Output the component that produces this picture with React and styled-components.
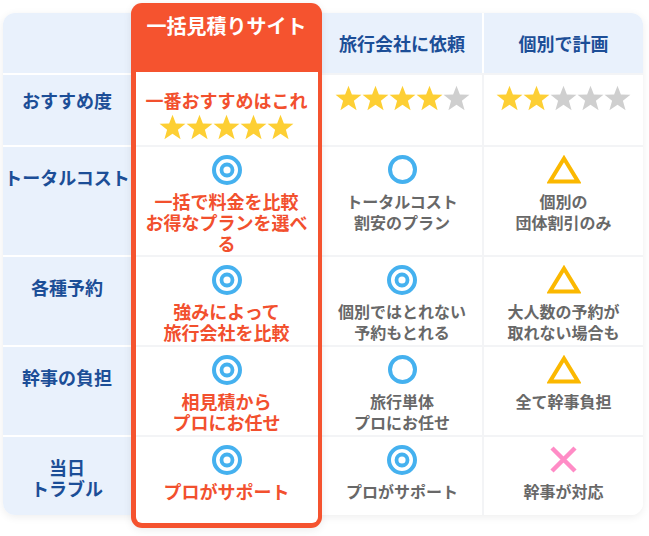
import styled, { createGlobalStyle } from 'styled-components'

const ROWS = [60, 72, 110, 90, 90, 80]

const GlobalStyle = createGlobalStyle`
  body {
    margin: 0;
    background: #fff;
    font-family: 'Noto Sans CJK JP', 'Noto Sans', sans-serif;
  }
`

const Page = styled.div`
  padding: 13px 0 21px 3px;
`

const Table = styled.div`
  display: grid;
  width: 640px;
  grid-template-columns: 128px 191px 160px 161px;
  grid-template-rows: ${ROWS.map((h) => h + 'px').join(' ')};
  border-radius: 12px;
  box-shadow: 0 2px 8px rgba(0, 0, 0, 0.07);
`

const HeadCell = styled.div`
  display: flex;
  align-items: center;
  justify-content: center;
  background: #e9f1fc;
  color: #1c4e97;
  font-size: 18px;
  font-weight: 700;
  border-left: ${(p) => (p.$divider ? '2px solid #fff' : 'none')};
  border-radius: ${(p) => p.$radius || '0'};
`

const LabelCell = styled.div`
  background: #e9f1fc;
  border-top: 2px solid #fff;
  border-radius: ${(p) => (p.$last ? '0 0 0 12px' : '0')};
  padding-top: ${(p) => (p.$first ? '15px' : '20px')};
  color: #1c4e97;
  font-size: 18px;
  font-weight: 700;
  line-height: 21px;
  text-align: center;
  white-space: pre-line;
`

const BodyCell = styled.div`
  display: flex;
  flex-direction: column;
  align-items: center;
  gap: 7px;
  background: #fff;
  border-top: 2px solid #f3f4f6;
  border-left: ${(p) => (p.$divider ? '2px solid #f3f4f6' : 'none')};
  border-radius: ${(p) => (p.$last && p.$divider ? '0 0 12px 0' : '0')};
  padding-top: ${(p) => p.$pad}px;
`

const GrayText = styled.div`
  color: #686868;
  font-size: 16px;
  font-weight: 700;
  line-height: 21px;
  text-align: center;
  white-space: pre-line;
`

const Highlight = styled.div`
  grid-column: 2;
  grid-row: 1 / span 6;
  align-self: start;
  height: 525px;
  box-sizing: border-box;
  margin-top: -10px;
  display: flex;
  flex-direction: column;
  background: #f5532f;
  border-radius: 11px;
  padding: 0 4.5px 5px;
  box-shadow: 0 2px 8px rgba(0, 0, 0, 0.08);
  position: relative;
  z-index: 1;
`

const HighlightTitle = styled.div`
  height: 69px;
  flex: none;
  padding-top: 9px;
  box-sizing: border-box;
  color: #fff;
  font-size: 20px;
  font-weight: 700;
  line-height: 28px;
  text-align: center;
`

const HighlightBody = styled.div`
  flex: 1;
  min-height: 0;
  display: flex;
  flex-direction: column;
  background: #fff;
  border-radius: 0 0 6px 6px;
`

const HighlightCell = styled.div`
  display: flex;
  flex-direction: column;
  align-items: center;
  gap: ${(p) => (p.$first ? '3px' : '7px')};
  box-sizing: border-box;
  height: ${(p) => (p.$fill ? 'auto' : p.$h + 'px')};
  flex: ${(p) => (p.$fill ? '1' : 'none')};
  border-top: ${(p) => (p.$first ? 'none' : '2px solid #f3f4f6')};
  padding: ${(p) => (p.$first ? '18px 8px 0' : '8px 8px 0')};
`

const OrangeText = styled.div`
  color: #f2502e;
  font-size: 18px;
  font-weight: 700;
  line-height: 21px;
  text-align: center;
  white-space: pre-line;
`

const IconBox = styled.div`
  height: 29px;
  display: flex;
  align-items: center;
  justify-content: center;
`

const StarRow = styled.div`
  display: flex;
`

const Star = ({ on }) => (
  <svg width="27" height="26" viewBox="0 0 24 23">
    <polygon
      points="12,0.5 15,8.3 23.5,8.6 16.8,13.9 19.2,22.3 12,17.4 4.8,22.3 7.2,13.9 0.5,8.6 9,8.3"
      fill={on ? '#fdcf34' : '#cfcfcf'}
    />
  </svg>
)

const Stars = ({ n }) => (
  <StarRow>
    {[0, 1, 2, 3, 4].map((i) => (
      <Star key={i} on={i < n} />
    ))}
  </StarRow>
)

const Mark = ({ type }) => {
  if (type === 'double')
    return (
      <svg width="30" height="30" viewBox="0 0 30 30">
        <circle cx="15" cy="15" r="13" fill="none" stroke="#45b1ef" strokeWidth="4" />
        <circle cx="15" cy="15" r="5.5" fill="none" stroke="#45b1ef" strokeWidth="3.8" />
      </svg>
    )
  if (type === 'circle')
    return (
      <svg width="29" height="29" viewBox="0 0 29 29">
        <circle cx="14.5" cy="14.5" r="12.5" fill="none" stroke="#45b1ef" strokeWidth="4" />
      </svg>
    )
  if (type === 'triangle')
    return (
      <svg width="34" height="29" viewBox="0 0 34 29">
        <polygon points="17,3.5 31,26.5 3,26.5" fill="none" stroke="#fbb800" strokeWidth="4" />
      </svg>
    )
  return (
    <svg width="29" height="29" viewBox="0 0 29 29">
      <path d="M3 3 L26 26 M26 3 L3 26" stroke="#ff8cc6" strokeWidth="4.5" />
    </svg>
  )
}

const rows = [
  {
    label: 'おすすめ度',
    best: { stars: 5, text: '一番おすすめはこれ' },
    others: [{ stars: 4 }, { stars: 2 }],
  },
  {
    label: 'トータルコスト',
    best: { mark: 'double', text: '一括で料金を比較\nお得なプランを選べる' },
    others: [
      { mark: 'circle', text: 'トータルコスト\n割安のプラン' },
      { mark: 'triangle', text: '個別の\n団体割引のみ' },
    ],
  },
  {
    label: '各種予約',
    best: { mark: 'double', text: '強みによって\n旅行会社を比較' },
    others: [
      { mark: 'double', text: '個別ではとれない\n予約もとれる' },
      { mark: 'triangle', text: '大人数の予約が\n取れない場合も' },
    ],
  },
  {
    label: '幹事の負担',
    best: { mark: 'double', text: '相見積から\nプロにお任せ' },
    others: [
      { mark: 'circle', text: '旅行単体\nプロにお任せ' },
      { mark: 'triangle', text: '全て幹事負担' },
    ],
  },
  {
    label: '当日\nトラブル',
    best: { mark: 'double', text: 'プロがサポート' },
    others: [
      { mark: 'double', text: 'プロがサポート' },
      { mark: 'cross', text: '幹事が対応' },
    ],
  },
]

export default function App() {
  return (
    <Page>
      <GlobalStyle />
      <Table>
        <HeadCell $radius="12px 0 0 0" />
        <Highlight>
          <HighlightTitle>一括見積りサイト</HighlightTitle>
          <HighlightBody>
            {rows.map((r, i) => (
              <HighlightCell
                key={i}
                $first={i === 0}
                $h={i === 0 ? 73 : ROWS[i + 1]}
                $fill={i === rows.length - 1}
              >
                {r.best.mark && (
                  <IconBox>
                    <Mark type={r.best.mark} />
                  </IconBox>
                )}
                <OrangeText>{r.best.text}</OrangeText>
                {r.best.stars && <Stars n={r.best.stars} />}
              </HighlightCell>
            ))}
          </HighlightBody>
        </Highlight>
        <HeadCell>旅行会社に依頼</HeadCell>
        <HeadCell $divider $radius="0 12px 0 0">
          個別で計画
        </HeadCell>
        {rows.map((r, i) => [
          <LabelCell key={'l' + i} $first={i === 0} $last={i === rows.length - 1}>
            {r.label}
          </LabelCell>,
          ...r.others.map((c, j) => (
            <BodyCell
              key={i + '-' + j}
              $divider={j === 1}
              $last={i === rows.length - 1}
              $pad={c.stars ? 10 : 8}
            >
              {c.stars ? (
                <Stars n={c.stars} />
              ) : (
                <>
                  <IconBox>
                    <Mark type={c.mark} />
                  </IconBox>
                  <GrayText>{c.text}</GrayText>
                </>
              )}
            </BodyCell>
          )),
        ])}
      </Table>
    </Page>
  )
}
